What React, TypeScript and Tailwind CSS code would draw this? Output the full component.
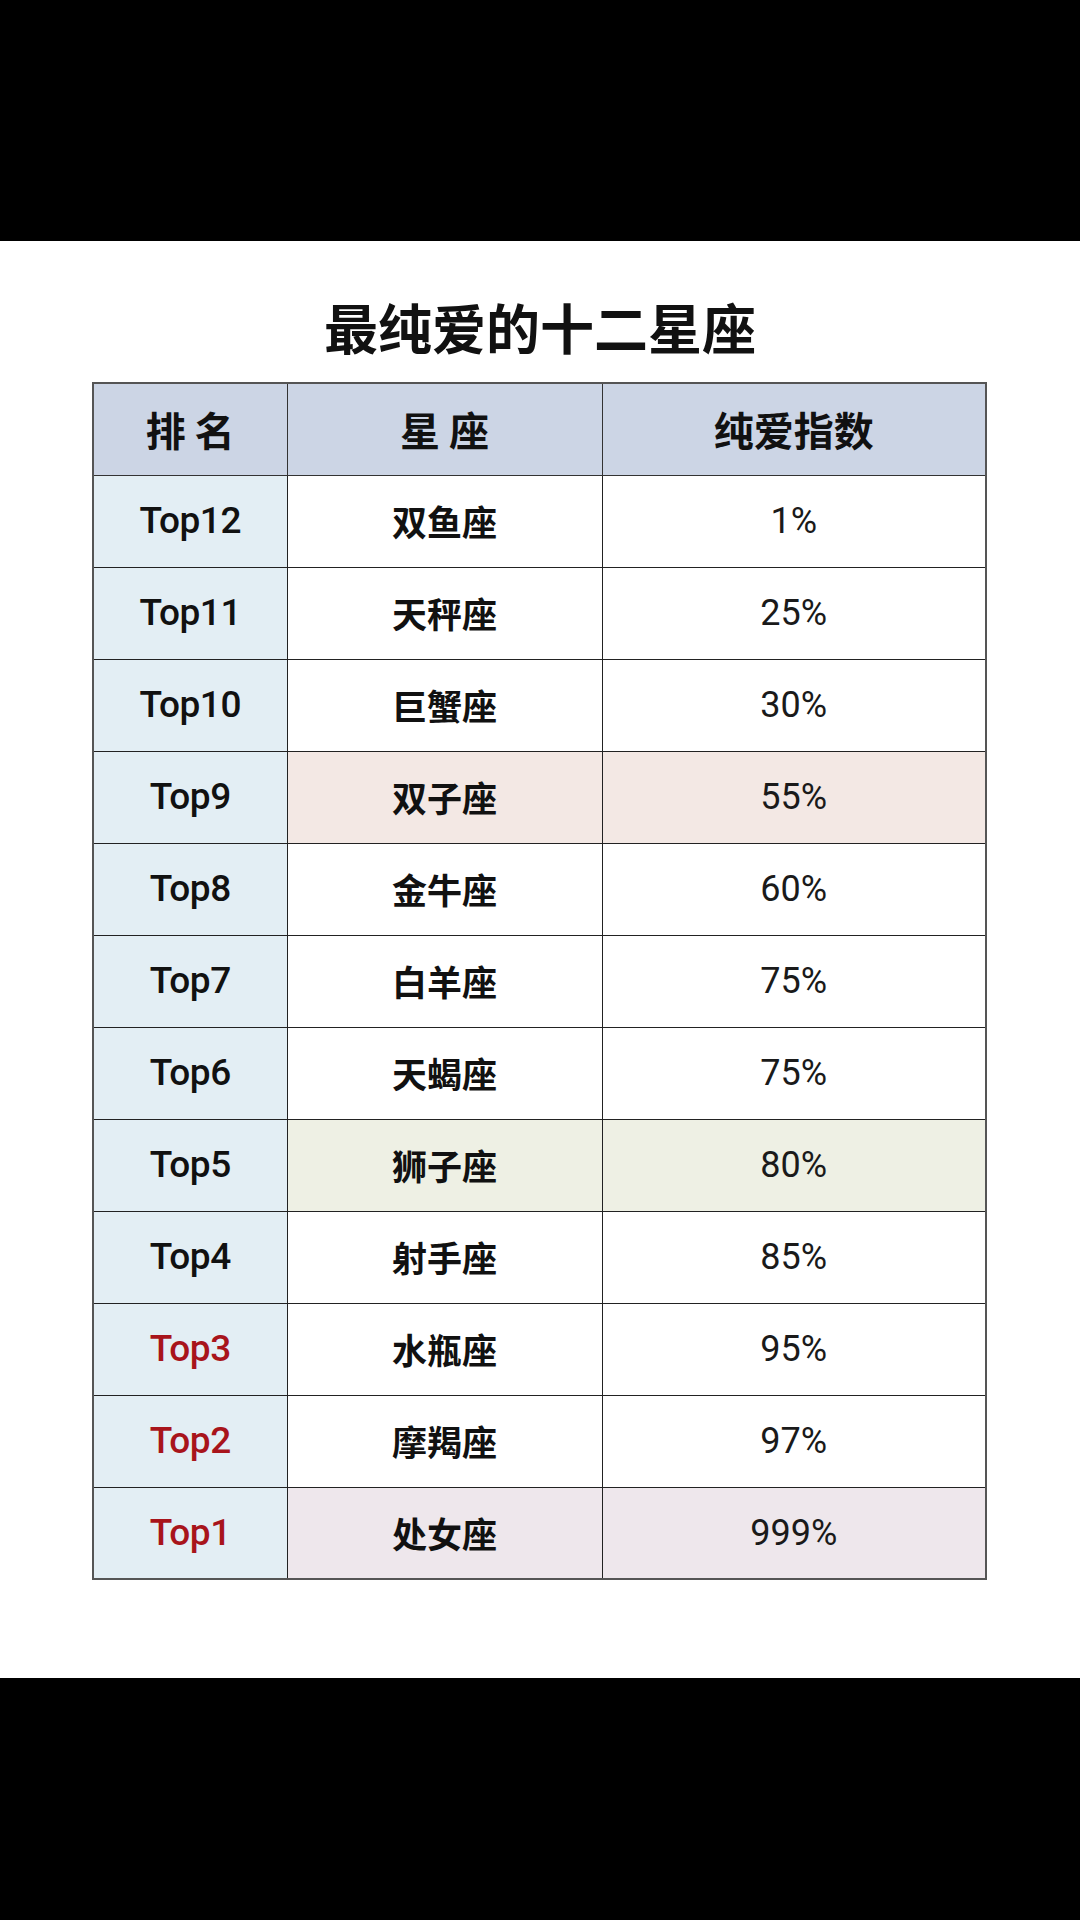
import React from "react";

type Row = { rank: string; name: string; value: string; red?: boolean; bg?: string };

const rows: Row[] = [
  { rank: "Top12", name: "双鱼座", value: "1%" },
  { rank: "Top11", name: "天秤座", value: "25%" },
  { rank: "Top10", name: "巨蟹座", value: "30%" },
  { rank: "Top9", name: "双子座", value: "55%", bg: "bg-[#f3e8e4]" },
  { rank: "Top8", name: "金牛座", value: "60%" },
  { rank: "Top7", name: "白羊座", value: "75%" },
  { rank: "Top6", name: "天蝎座", value: "75%" },
  { rank: "Top5", name: "狮子座", value: "80%", bg: "bg-[#eef0e4]" },
  { rank: "Top4", name: "射手座", value: "85%" },
  { rank: "Top3", name: "水瓶座", value: "95%", red: true },
  { rank: "Top2", name: "摩羯座", value: "97%", red: true },
  { rank: "Top1", name: "处女座", value: "999%", red: true, bg: "bg-[#eee7ec]" },
];

const cjk = "font-['Noto_Sans_CJK_SC','Noto_Sans',sans-serif]";

export default function App() {
  return (
    <div className="w-[1080px] h-[1920px] flex flex-col bg-black">
      <div className="h-[241px] bg-black" />
      <div className="h-[1437px] bg-white flex flex-col">
        <h1
          className={`${cjk} mt-[59px] text-center text-[54px] leading-none font-bold text-[#111]`}
        >
          最纯爱的十二星座
        </h1>
        <div className="mt-[28px] ml-[92px]">
          <table className="table-fixed border-collapse w-[893px] border-2 border-[#555]">
            <colgroup>
              <col className="w-[194px]" />
              <col className="w-[315px]" />
              <col className="w-[384px]" />
            </colgroup>
            <thead>
              <tr className="h-[92px] bg-[#ccd5e5]">
                <th className={`${cjk} border border-[#333] text-[40px] font-bold text-[#111] text-center align-middle`}>
                  排 名
                </th>
                <th className={`${cjk} border border-[#333] text-[40px] font-bold text-[#111] text-center align-middle`}>
                  星 座
                </th>
                <th className={`${cjk} border border-[#333] text-[40px] font-bold text-[#111] text-center align-middle`}>
                  纯爱指数
                </th>
              </tr>
            </thead>
            <tbody>
              {rows.map((r) => (
                <tr key={r.rank} className="h-[92px]">
                  <td
                    className={`border border-[#222] bg-[#e3eef4] text-center align-middle font-['Roboto','Liberation_Sans',sans-serif] font-medium text-[37px] tracking-[-0.5px] ${
                      r.red ? "text-[#a8141b]" : "text-[#111]"
                    }`}
                  >
                    {r.rank}
                  </td>
                  <td
                    className={`border border-[#222] text-center align-middle ${cjk} font-semibold text-[35px] text-[#111] ${
                      r.bg ?? "bg-white"
                    }`}
                  >
                    {r.name}
                  </td>
                  <td
                    className={`border border-[#222] text-center align-middle font-['Roboto','Liberation_Sans',sans-serif] font-normal text-[36px] text-[#1a1a1a] ${
                      r.bg ?? "bg-white"
                    }`}
                  >
                    {r.value}
                  </td>
                </tr>
              ))}
            </tbody>
          </table>
        </div>
      </div>
      <div className="flex-1 bg-black" />
    </div>
  );
}
